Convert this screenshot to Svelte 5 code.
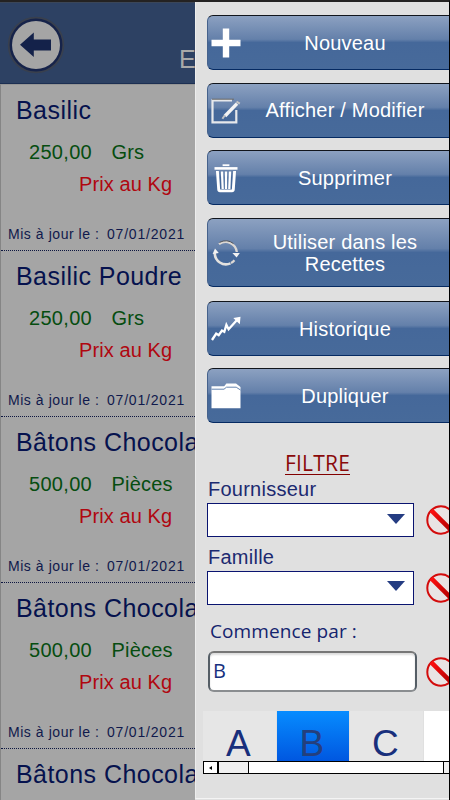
<script lang="ts">
  type Product = { name: string; price: string; unit: string; date: string };

  const products: Product[] = [
    { name: 'Basilic', price: '250,00', unit: 'Grs', date: '07/01/2021' },
    { name: 'Basilic Poudre', price: '250,00', unit: 'Grs', date: '07/01/2021' },
    { name: 'Bâtons Chocolat', price: '500,00', unit: 'Pièces', date: '07/01/2021' },
    { name: 'Bâtons Chocolat', price: '500,00', unit: 'Pièces', date: '07/01/2021' },
    { name: 'Bâtons Chocolat', price: '', unit: '', date: '' }
  ];

  const actions = [
    { icon: 'plus', label: 'Nouveau' },
    { icon: 'edit', label: 'Afficher / Modifier' },
    { icon: 'trash', label: 'Supprimer' },
    { icon: 'cycle', label: 'Utiliser dans les Recettes', tall: true },
    { icon: 'chart', label: 'Historique' },
    { icon: 'folder', label: 'Dupliquer' }
  ];

  const letters = ['A', 'B', 'C', ''];

  let letter = $state('B');
</script>

{#snippet forbidden(clear?: () => void)}
  <button class="clear" aria-label="Effacer" onclick={clear}>
    <svg width="32" height="32" viewBox="0 0 32 32">
      <defs>
        <linearGradient id="red" x1="0" y1="0" x2="1" y2="1">
          <stop offset="0" stop-color="#ff1010" />
          <stop offset="1" stop-color="#b00000" />
        </linearGradient>
      </defs>
      <circle cx="16" cy="16" r="13.7" fill="#e9e4e4" stroke="#d30c0c" stroke-width="2" />
      <path d="M6.3 6.3 25.7 25.7" stroke="url(#red)" stroke-width="4.6" />
    </svg>
  </button>
{/snippet}

<div class="screen">
  <main>
    <header>
      <button class="back" aria-label="Retour">
        <svg width="60" height="60" viewBox="0 0 60 60">
          <circle cx="30" cy="30" r="27.3" fill="#16234a" stroke="#39404e" stroke-width="1.8" />
          <circle cx="30" cy="30" r="24" fill="#a5a5a5" />
          <path d="M14 29.8 27.8 17.6V24.6H45V35.4H27.8V42Z" fill="#14224a" />
        </svg>
      </button>
      <h1>E</h1>
    </header>
    <ul>
      {#each products as p}
        <li>
          <h2>{p.name}</h2>
          {#if p.price}
            <p class="price"><span>{p.price}</span><span>{p.unit}</span></p>
            <p class="per">Prix au Kg</p>
            <p class="updated"><span>Mis à jour le :</span><span>{p.date}</span></p>
          {/if}
        </li>
      {/each}
    </ul>
  </main>

  <aside>
    <nav>
      {#each actions as action}
        <button class="action" class:tall={action.tall}>
          <svg width="32" height="32" viewBox="0 0 32 32" fill="none" stroke="#fff">
            {#if action.icon === 'plus'}
              <path d="M1.5 16H30.5M16 1.5V30.5" stroke-width="6.4" />
            {:else if action.icon === 'edit'}
              <path d="M26.3 15V27.3H2.5V5.4H22" stroke="#e6e8eb" stroke-width="2.2" />
              <path d="M2 4.2H24" stroke="#6d6a66" stroke-width="1" />
              <path d="M15 21 27 8.6" stroke="#f4f4f4" stroke-width="3.4" />
              <path d="M26.5 6.6 29.8 8.6M12.4 23.8 15 20" stroke="#c4c4c4" stroke-width="2" />
            {:else if action.icon === 'trash'}
              <path d="M4.5 6.4H27.5" stroke-width="2.6" />
              <path d="M12.6 3.2H19.4" stroke-width="1.8" />
              <path d="M7.4 9 8.7 27.5Q8.8 28.9 10 28.9H22Q23.2 28.9 23.3 27.5L24.6 9" stroke-width="2.9" />
              <path d="M12 9.5 12.7 27M16 9.5V27M20 9.5 19.3 27" stroke-width="2.3" />
            {:else if action.icon === 'cycle'}
              <path d="M9 7.2A11.2 11.2 0 0 1 26.8 15M24.4 23.2A11.2 11.2 0 0 1 21 26" stroke="#dcd8d4" stroke-width="2.3" />
              <path d="M4.8 16A11.2 11.2 0 0 0 20.5 26.4" stroke="#e4e2df" stroke-width="2.6" />
              <path d="M9.5 5.4Q17 1.6 23.5 6.6" stroke="#55565a" stroke-width="1" />
              <path d="M2.6 17 5 11.4 8.8 16ZM22.4 16H29.8L26.6 20.6Z" fill="#f2f2f2" stroke="none" />
            {:else if action.icon === 'chart'}
              <path d="M2 27 6.2 20.6 8.7 22.2 12 17.6 14.3 18.9 16.4 11.8 18.6 16.2 27 7" stroke-width="2.3" />
              <path d="M23.3 5 30.5 3.8 29.8 11.2Z" fill="#fff" stroke="none" />
            {:else}
              <path d="M1.5 6.2H14.2L16.4 3.5H26L30.5 7V28.3H1.5Z" fill="#fff" stroke="none" />
              <path d="M1.5 9.2H14L16.5 7.2H26.2L30.5 10" stroke="#6585b0" stroke-width="1" />
            {/if}
          </svg>
          <span>{action.label}</span>
        </button>
      {/each}
    </nav>

    <section class="filters">
      <h3>FILTRE</h3>
      <div class="field">
        <div class="label">Fournisseur</div>
        <div class="row">
          <div class="select"><i></i></div>
          {@render forbidden()}
        </div>
      </div>
      <div class="field">
        <div class="label">Famille</div>
        <div class="row">
          <div class="select"><i></i></div>
          {@render forbidden()}
        </div>
      </div>
      <div class="starts">Commence par :</div>
      <div class="row last">
        <input bind:value={letter} aria-label="Commence par" />
        {@render forbidden(() => (letter = ''))}
      </div>
    </section>

    <div class="letters">
      {#each letters as l}
        <button class:active={l !== '' && l === letter} class:blank={!l} onclick={() => (letter = l)}>{l}</button>
      {/each}
    </div>
    <div class="scrollbar">
      <span class="arrow"></span>
      <span class="before"></span>
      <span class="thumb"></span>
      <span class="after"></span>
    </div>
  </aside>
</div>

<style>
  :global(body) {
    margin: 0;
    overflow: hidden;
  }

  * {
    box-sizing: border-box;
  }

  h1, h2, h3, p, ul {
    margin: 0;
    padding: 0;
    font-weight: normal;
  }

  button {
    font-family: inherit;
    border: 0;
    padding: 0;
    background: none;
  }

  svg {
    display: block;
    flex: none;
  }

  .screen {
    display: flex;
    width: 450px;
    height: 800px;
    overflow: hidden;
    border-top: 2px solid #242222;
    border-right: 1px solid #000;
    font-family: 'Liberation Sans', Arial, sans-serif;
    background: #e0e0e0;
  }

  main {
    width: 195px;
    flex: none;
    overflow: hidden;
    background: #a5a5a5;
  }

  header {
    display: flex;
    height: 82px;
    padding: 12px 0 0 6px;
    background: #2d4163;
    border-top: 1px solid #3b4658;
    border-bottom: 1px solid #1c2f52;
  }

  .back {
    flex: none;
    width: 60px;
    height: 60px;
  }

  h1 {
    margin: 30px 0 0 113px;
    color: #a9a9a9;
    font-size: 25px;
    line-height: 28px;
  }

  ul {
    list-style: none;
    border-left: 1px solid #858585;
    border-top: 1px solid #969696;
  }

  li {
    height: 166px;
    padding-top: 10px;
    border-bottom: 1px dotted #0d1640;
    white-space: nowrap;
  }

  h2 {
    padding-left: 15px;
    color: #06124e;
    font-size: 25px;
    line-height: 30px;
    letter-spacing: 0.45px;
  }

  .price {
    display: flex;
    margin-top: 16px;
    padding-left: 28px;
    color: #064d10;
    font-size: 20px;
    line-height: 22px;
    letter-spacing: 0.2px;
  }

  .price span:first-child {
    width: 82.5px;
    letter-spacing: 0.3px;
  }

  .per {
    margin-top: 10px;
    padding-left: 78px;
    color: #b00710;
    font-size: 20px;
    line-height: 22px;
    letter-spacing: 0.1px;
  }

  .updated {
    display: flex;
    margin-top: 31px;
    padding-left: 7px;
    color: #10194c;
    font-size: 14px;
    line-height: 16px;
    letter-spacing: 0.8px;
  }

  .updated span:first-child {
    width: 99px;
    letter-spacing: 0.55px;
  }

  aside {
    width: 254px;
    flex: none;
    height: 796px;
    overflow: hidden;
    background: #e0e0e0;
    border-left: 1px solid #ededed;
    border-bottom: 1px solid #f4f4f4;
    box-sizing: content-box;
  }

  nav {
    display: flex;
    flex-direction: column;
    gap: 12.7px;
    padding: 13px 0 0 11px;
  }

  .action {
    display: flex;
    align-items: center;
    width: 248px;
    height: 55px;
    padding: 1px 5px 0 2px;
    border: 1px solid #1b3561;
    border-top-color: #11151c;
    border-left-color: #46628c;
    border-bottom-color: #052a62;
    border-radius: 6px;
    background: linear-gradient(#8ca1c1, #6480aa 44%, #45689a 50%, #476a9a);
    color: #fff;
    font-size: 20px;
    line-height: 22.5px;
    letter-spacing: 0.2px;
  }

  .action.tall {
    height: 69px;
    margin-bottom: 1px;
  }

  .action span {
    flex: 1;
    padding: 0 12px 0 11px;
    text-align: center;
  }

  .filters {
    padding: 29px 0 0 11px;
    color: #1c2a70;
  }

  h3 {
    width: fit-content;
    margin-left: 78px;
    border-bottom: 1px solid #820000;
    color: #8a0a0a;
    font-family: 'Open Sans', sans-serif;
    font-size: 21px;
    line-height: 22px;
    letter-spacing: 0.2px;
  }

  .label {
    padding: 3px 0 0 1px;
    font-size: 20px;
    line-height: 23px;
    letter-spacing: 0.25px;
  }

  .row {
    display: flex;
    align-items: center;
    height: 34px;
    margin-top: 2px;
  }

  .field {
    height: 67.5px;
  }

  .select {
    display: flex;
    flex: none;
    justify-content: flex-end;
    align-items: center;
    width: 207px;
    height: 34px;
    padding: 0 8px 3px 0;
    background: #fff;
    border: 1px solid #0a1470;
  }

  .select i {
    border: 9.5px solid transparent;
    border-top: 10px solid #243c82;
    border-bottom: 0;
  }

  .clear {
    flex: none;
    margin-left: 11px;
  }

  .starts {
    padding: 8px 0 0 3px;
    color: #14246e;
    font-family: 'Open Sans', sans-serif;
    font-size: 19px;
    line-height: 26px;
    letter-spacing: 0.1px;
  }

  .row.last {
    height: 41px;
    margin-top: 7px;
  }

  input {
    flex: none;
    width: 209px;
    height: 41px;
    margin-left: 1px;
    padding: 0 0 2px 3px;
    border: 2px solid #555e66;
    border-top-color: #777;
    border-bottom-color: #8a8d90;
    border-radius: 6px;
    background: #fff;
    box-shadow: inset 0 2px 2px #ddd;
    color: #16307e;
    font-family: 'Open Sans', sans-serif;
    font-size: 20px;
    outline: 0;
  }

  .last .clear {
    margin-left: 8px;
  }

  .letters {
    display: flex;
    height: 50px;
    margin: 19px 0 0 7px;
    overflow: hidden;
  }

  .letters button {
    flex: none;
    width: 73.6px;
    height: 66px;
    border-right: 1px solid #e0e0e0;
    background: #e6e6e6;
    color: #182f7c;
    font-size: 37px;
    line-height: 66px;
    padding-right: 2px;
  }

  .letters .active {
    background: linear-gradient(#078cff, #0057e0 50px);
    color: #243f7d;
  }

  .letters .blank {
    background: #fff;
  }

  .scrollbar {
    display: flex;
    height: 13px;
    margin-left: 7px;
    border: 1px solid #000;
    border-right: 0;
    background: #fff;
  }

  .arrow {
    display: flex;
    align-items: center;
    justify-content: center;
    width: 15px;
    border-right: 2px solid #000;
  }

  .arrow::before {
    content: '';
    border: 2.5px solid transparent;
    border-right: 3px solid #000;
    border-left: 0;
  }

  .before {
    width: 30px;
    background: #f0f0f0;
    border-right: 1px solid #000;
  }

  .thumb {
    width: 195px;
    border-right: 1px solid #000;
  }

  .after {
    flex: 1;
    background: #f0f0f0;
  }
</style>
